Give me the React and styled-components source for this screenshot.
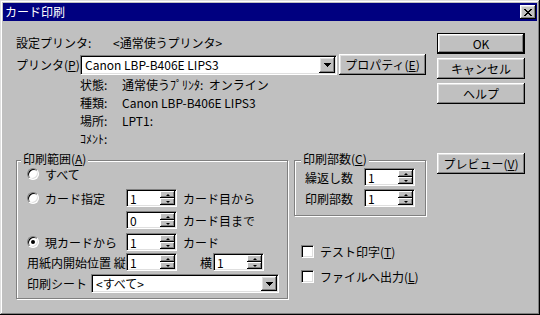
import React from "react";
import styled, { createGlobalStyle, css } from "styled-components";

const GlobalStyle = createGlobalStyle`
  body {
    margin: 0;
    background: #c0c0c0;
    font-family: "Noto Sans CJK JP", "Noto Sans", sans-serif;
    font-size: 12px;
    color: #000;
  }
`;

const raised = css`
  box-shadow: inset -1px -1px #000, inset 1px 1px #fff, inset -2px -2px #808080,
    inset 2px 2px #dfdfdf;
`;

const sunken = css`
  border: 1px solid;
  border-color: #808080 #fff #fff #808080;
  box-shadow: inset 1px 1px #000, inset -1px -1px #dfdfdf;
`;

const CLOSE_PIXELS = [
  "XX....XX",
  ".XX..XX.",
  "..XXXX..",
  "...XX...",
  "..XXXX..",
  ".XX..XX.",
  "XX....XX",
];

const ARROW_ROWS = [
  [0, 7],
  [1, 5],
  [2, 3],
  [3, 1],
];

function CloseGlyph() {
  return (
    <svg width="8" height="7" shapeRendering="crispEdges">
      {CLOSE_PIXELS.map((row, y) =>
        row.split("").map((c, x) =>
          c === "X" ? <rect key={`${x}-${y}`} x={x} y={y} width="1" height="1" /> : null
        )
      )}
    </svg>
  );
}

function DownArrow() {
  return (
    <svg width="7" height="4" shapeRendering="crispEdges">
      {ARROW_ROWS.map(([x, w], y) => (
        <rect key={y} x={x} y={y} width={w} height="1" />
      ))}
    </svg>
  );
}

function Spinner({ value }) {
  return (
    <SpinBox>
      <SpinValue>{value}</SpinValue>
      <SpinButtons>
        <SpinButton>
          <TinyArrow $up />
        </SpinButton>
        <SpinButton>
          <TinyArrow />
        </SpinButton>
      </SpinButtons>
    </SpinBox>
  );
}

function Combo({ w, h, children }) {
  return (
    <ComboBox $w={w} $h={h}>
      <ComboValue>{children}</ComboValue>
      <DropButton>
        <DownArrow />
      </DropButton>
    </ComboBox>
  );
}

export default function App() {
  return (
    <>
      <GlobalStyle />
      <Window>
        <TitleBar>
          <span>カード印刷</span>
          <CloseButton>
            <CloseGlyph />
          </CloseButton>
        </TitleBar>

        <Body>
          <Main>
            <Line $h={18}>
              <Label $w={97}>設定プリンタ:</Label>
              <span>&lt;通常使うプリンタ&gt;</span>
            </Line>
            <Line $h={21} $mt={3}>
              <Label $w={64}>
                プリンタ(<u>P</u>)
              </Label>
              <Combo w={257} h={20}>
                Canon LBP-B406E LIPS3
              </Combo>
              <Button $w={87} $ml={2}>
                プロパティ(<u>E</u>)
              </Button>
            </Line>

            <Info>
              <Line $h={18}>
                <Label $w={42}>状態:</Label>
                <span>通常使うﾌﾟﾘﾝﾀ:&nbsp;&nbsp;オンライン</span>
              </Line>
              <Line $h={18}>
                <Label $w={42}>種類:</Label>
                <span>Canon LBP-B406E LIPS3</span>
              </Line>
              <Line $h={18}>
                <Label $w={42}>場所:</Label>
                <span>LPT1:</span>
              </Line>
              <Line $h={18}>
                <Label $w={42}>ｺﾒﾝﾄ:</Label>
              </Line>
            </Info>

            <Lower>
              <Group $w={272} $h={139} $pt={5} $pl={10}>
                <GroupTitle $left={4}>
                  印刷範囲(<u>A</u>)
                </GroupTitle>
                <Line $h={16}>
                  <Radio />
                  <span>すべて</span>
                </Line>
                <Line $h={18} $mt={7}>
                  <Label $w={99}>
                    <Radio />
                    カード指定
                  </Label>
                  <Spinner value="1" />
                  <After>カード目から</After>
                </Line>
                <Line $h={18} $mt={4}>
                  <Label $w={99} />
                  <Spinner value="0" />
                  <After>カード目まで</After>
                </Line>
                <Line $h={18} $mt={4}>
                  <Label $w={99}>
                    <Radio $checked />
                    現カードから
                  </Label>
                  <Spinner value="1" />
                  <After>カード</After>
                </Line>
                <Line $h={18} $mt={2}>
                  <Label $w={99}>用紙内開始位置 縦</Label>
                  <Spinner value="1" />
                  <Label $w={13} $ml={23}>
                    横
                  </Label>
                  <Spinner value="1" />
                </Line>
                <Line $h={19} $mt={3}>
                  <Label $w={64}>印刷シート</Label>
                  <Combo w={188} h={19}>
                    &lt;すべて&gt;
                  </Combo>
                </Line>
              </Group>

              <Aside>
                <Group $w={132} $h={56} $pt={7} $pl={10}>
                  <GroupTitle $left={6}>
                    印刷部数(<u>C</u>)
                  </GroupTitle>
                  <Line $h={18}>
                    <Label $w={59}>繰返し数</Label>
                    <Spinner value="1" />
                  </Line>
                  <Line $h={18} $mt={3}>
                    <Label $w={59}>印刷部数</Label>
                    <Spinner value="1" />
                  </Line>
                </Group>

                <Checks>
                  <Line $h={13}>
                    <CheckBox />
                    <span>
                      テスト印字(<u>T</u>)
                    </span>
                  </Line>
                  <Line $h={13} $mt={12}>
                    <CheckBox />
                    <span>
                      ファイルへ出力(<u>L</u>)
                    </span>
                  </Line>
                </Checks>
              </Aside>
            </Lower>
          </Main>

          <Side>
            <Button $default>OK</Button>
            <Button $mt={4}>キャンセル</Button>
            <Button $mt={4}>ヘルプ</Button>
            <Button $mt={49}>
              プレビュー(<u>V</u>)
            </Button>
          </Side>
        </Body>
      </Window>
    </>
  );
}

const Window = styled.div`
  width: 540px;
  height: 315px;
  box-sizing: border-box;
  padding: 3px;
  background: #c0c0c0;
  box-shadow: inset -1px -1px #000, inset 1px 1px #dfdfdf, inset -2px -2px #808080,
    inset 2px 2px #fff;
  display: flex;
  flex-direction: column;
`;

const TitleBar = styled.div`
  height: 18px;
  flex-shrink: 0;
  background: #000080;
  color: #fff;
  display: flex;
  align-items: center;
  justify-content: space-between;
  padding: 0 1px 0 2px;
  line-height: 18px;
`;

const CloseButton = styled.div`
  width: 16px;
  height: 14px;
  background: #c0c0c0;
  display: grid;
  place-items: center;
  ${raised}
  svg {
    fill: #000;
    margin-left: -1px;
  }
`;

const Body = styled.div`
  display: flex;
  gap: 11px;
  padding: 12px 0 0 13px;
`;

const Main = styled.div`
  width: 410px;
  display: flex;
  flex-direction: column;
`;

const Side = styled.div`
  width: 88px;
  display: flex;
  flex-direction: column;
`;

const Line = styled.div`
  display: flex;
  align-items: center;
  height: ${(p) => p.$h}px;
  margin-top: ${(p) => p.$mt || 0}px;
  white-space: nowrap;
  gap: ${(p) => p.$gap || 0}px;
`;

const Label = styled.span`
  width: ${(p) => p.$w}px;
  margin-left: ${(p) => p.$ml || 0}px;
  flex-shrink: 0;
  display: flex;
  align-items: center;
  white-space: nowrap;
`;

const After = styled.span`
  margin-left: 6px;
`;

const Info = styled.div`
  padding-left: 64px;
  display: flex;
  flex-direction: column;
`;

const Lower = styled.div`
  display: flex;
  gap: 6px;
  margin-top: 13px;
`;

const Aside = styled.div`
  display: flex;
  flex-direction: column;
`;

const Group = styled.div`
  position: relative;
  box-sizing: border-box;
  width: ${(p) => p.$w}px;
  height: ${(p) => p.$h}px;
  padding: ${(p) => p.$pt}px 0 0 ${(p) => p.$pl}px;
  border: 1px solid #808080;
  box-shadow: inset 1px 1px #fff, 1px 1px #fff;
  display: flex;
  flex-direction: column;
`;

const GroupTitle = styled.span`
  position: absolute;
  top: -9px;
  left: ${(p) => p.$left}px;
  padding: 0 2px;
  line-height: 14px;
  background: #c0c0c0;
`;

const Checks = styled.div`
  margin-top: 29px;
  padding-left: 7px;
  display: flex;
  flex-direction: column;
`;

const Button = styled.button`
  width: ${(p) => p.$w || 88}px;
  height: 21px;
  margin-top: ${(p) => p.$mt || 0}px;
  margin-left: ${(p) => p.$ml || 0}px;
  padding: 0;
  flex-shrink: 0;
  font: inherit;
  color: #000;
  background: #c0c0c0;
  border: ${(p) => (p.$default ? "1px solid #000" : "none")};
  ${raised}
  white-space: nowrap;
`;

const ComboBox = styled.div`
  box-sizing: border-box;
  width: ${(p) => p.$w}px;
  height: ${(p) => p.$h}px;
  flex-shrink: 0;
  padding: 1px;
  background: #fff;
  display: flex;
  ${sunken}
`;

const ComboValue = styled.span`
  flex: 1;
  padding-left: 3px;
  display: flex;
  align-items: center;
  overflow: hidden;
`;

const DropButton = styled.span`
  width: 16px;
  background: #c0c0c0;
  display: grid;
  place-items: center;
  ${raised}
  svg {
    fill: #000;
  }
`;

const SpinBox = styled.div`
  box-sizing: border-box;
  width: 51px;
  height: 18px;
  flex-shrink: 0;
  padding: 1px;
  background: #fff;
  display: flex;
  ${sunken}
`;

const SpinValue = styled.span`
  flex: 1;
  padding-left: 2px;
  display: flex;
  align-items: center;
`;

const SpinButtons = styled.span`
  width: 15px;
  display: flex;
  flex-direction: column;
`;

const SpinButton = styled.span`
  flex: 1;
  background: #c0c0c0;
  display: grid;
  place-items: center;
  box-shadow: inset -1px -1px #000, inset 1px 1px #fff, inset -2px -2px #808080;
`;

const TinyArrow = styled.span`
  width: 0;
  height: 0;
  border-left: 2px solid transparent;
  border-right: 2px solid transparent;
  ${(p) =>
    p.$up ? "border-bottom: 2px solid #000;" : "border-top: 2px solid #000;"}
`;

const Radio = styled.span`
  box-sizing: border-box;
  width: 12px;
  height: 12px;
  flex-shrink: 0;
  margin-right: 6px;
  border-radius: 50%;
  background: #fff;
  display: grid;
  place-items: center;
  ${sunken}
  &::after {
    content: "";
    width: 4px;
    height: 4px;
    border-radius: 50%;
    background: ${(p) => (p.$checked ? "#000" : "transparent")};
  }
`;

const CheckBox = styled.span`
  box-sizing: border-box;
  width: 13px;
  height: 13px;
  flex-shrink: 0;
  margin-right: 6px;
  background: #fff;
  ${sunken}
`;
